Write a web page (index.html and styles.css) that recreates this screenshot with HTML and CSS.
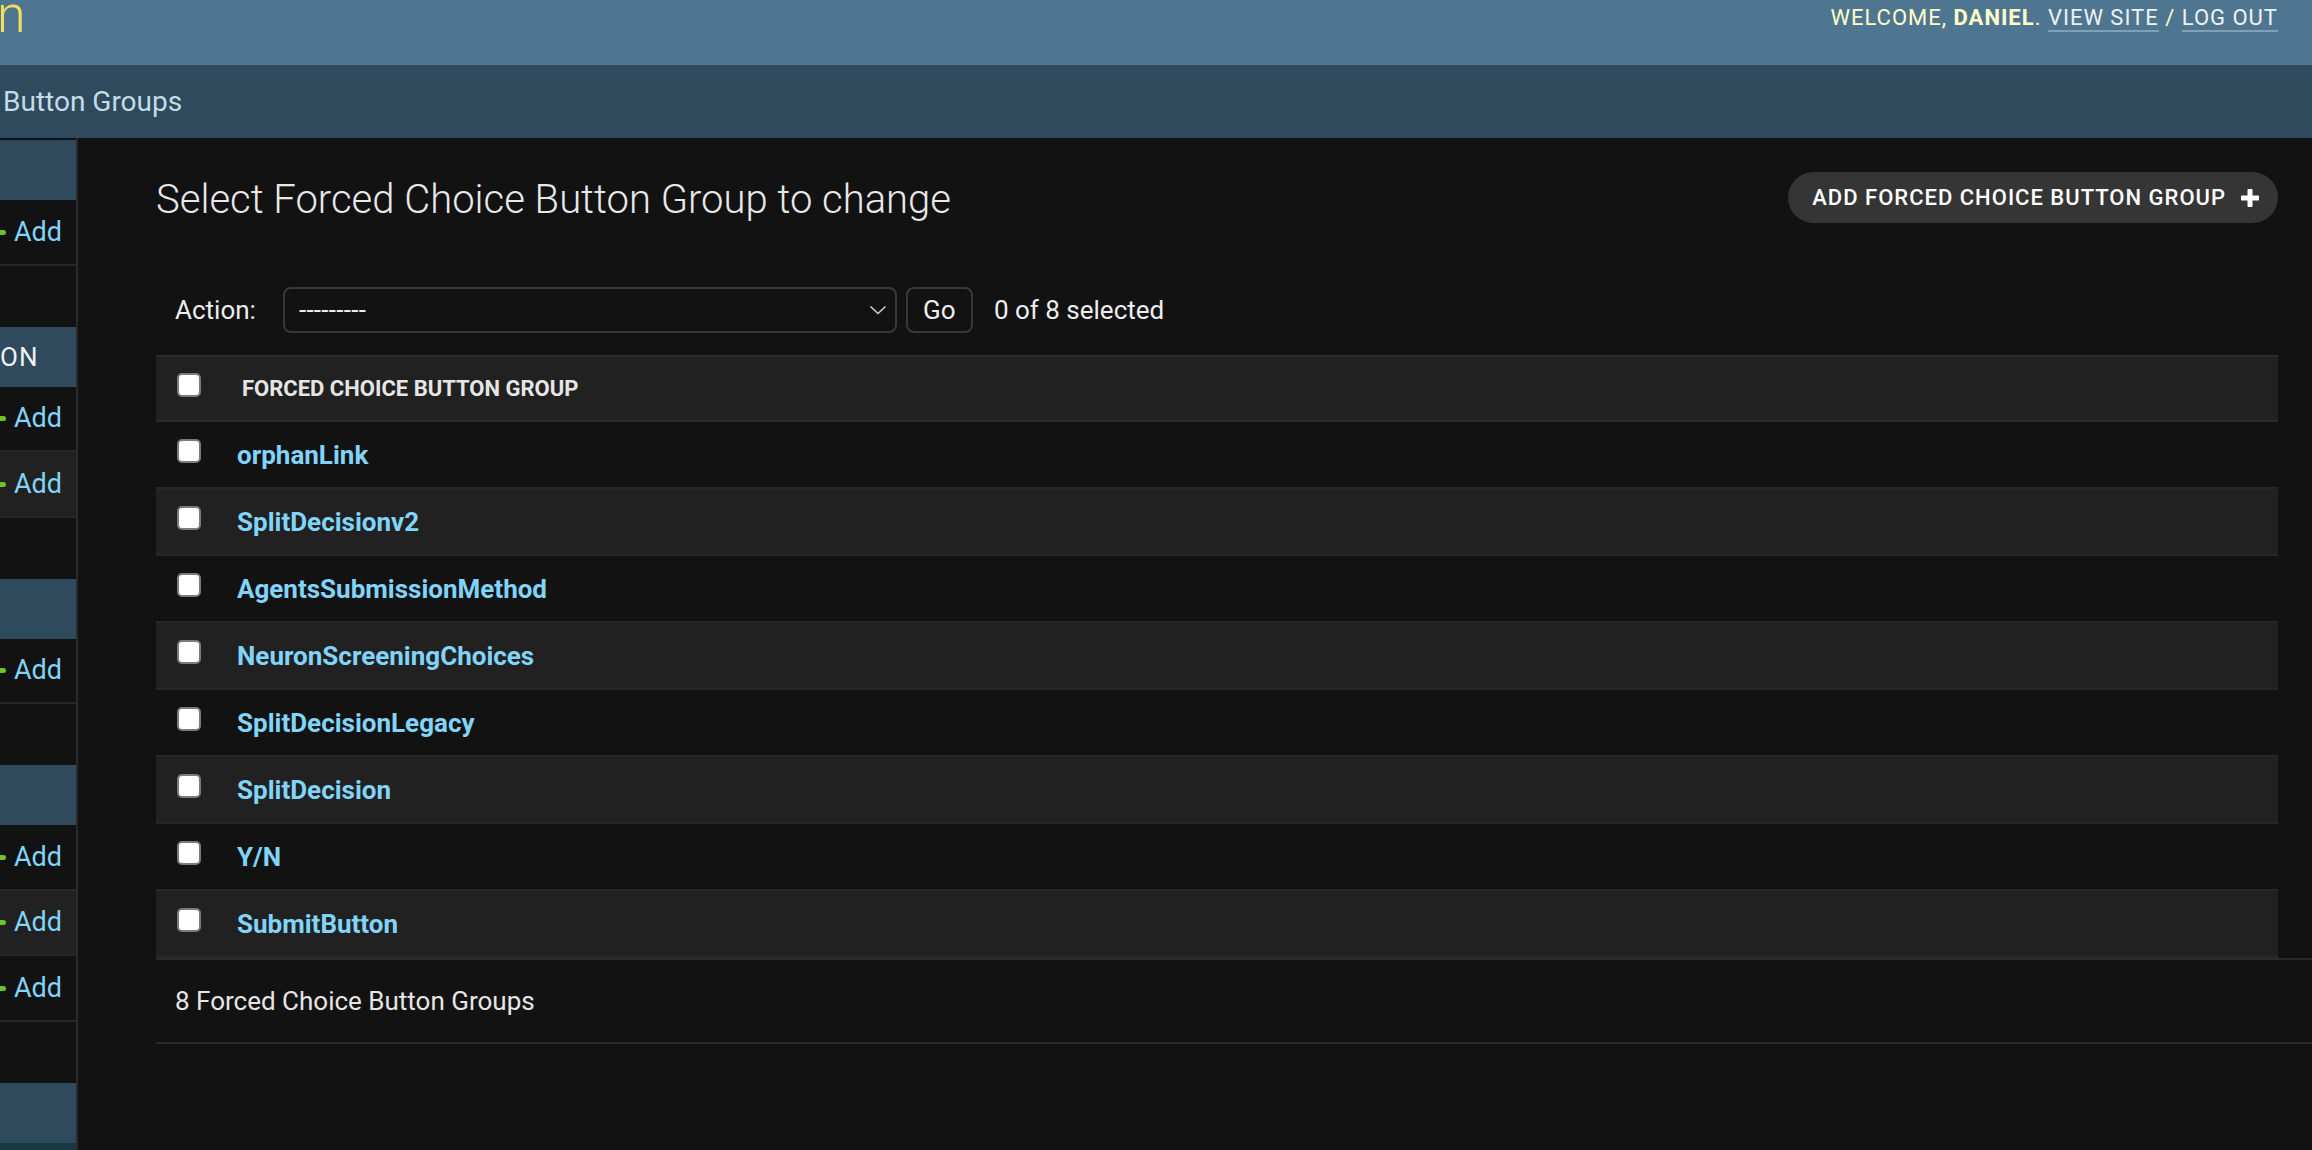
FILE: index.html
```html
<!DOCTYPE html>
<html lang="en">
<head>
<meta charset="utf-8">
<title>Select Forced Choice Button Group to change</title>
<link rel="stylesheet" href="styles.css">
</head>
<body>
<div class="header">
  <div class="brand">n</div>
  <div class="user-tools">WELCOME, <strong>DANIEL</strong>. <a class="ut-link">VIEW SITE</a> / <a class="ut-link">LOG OUT</a></div>
</div>
<div class="breadcrumbs">Button Groups</div>
<div class="main">
  <nav class="sidebar">
    <div class="module">
      <div class="caption"></div>
      <div class="srow"><span class="plus"></span><span class="add">Add</span></div>
    </div>
    <div class="module">
      <div class="caption">ON</div>
      <div class="srow"><span class="plus"></span><span class="add">Add</span></div>
      <div class="srow alt"><span class="plus"></span><span class="add">Add</span></div>
    </div>
    <div class="module">
      <div class="caption"></div>
      <div class="srow"><span class="plus"></span><span class="add">Add</span></div>
    </div>
    <div class="module">
      <div class="caption"></div>
      <div class="srow"><span class="plus"></span><span class="add">Add</span></div>
      <div class="srow alt"><span class="plus"></span><span class="add">Add</span></div>
      <div class="srow"><span class="plus"></span><span class="add">Add</span></div>
    </div>
    <div class="module">
      <div class="caption"></div>
      <div class="srow current"></div>
    </div>
  </nav>
  <div class="content">
    <div class="content-head">
      <h1 class="title">Select Forced Choice Button Group to change</h1>
      <a class="addbtn">ADD FORCED CHOICE BUTTON GROUP
        <svg class="plus-icon" width="18" height="18" viewBox="0 0 18 18"><path d="M9 1.5v15M1.5 9h15" stroke="#ffffff" stroke-width="5" stroke-linecap="round"/></svg>
      </a>
    </div>
    <div class="actions">
      <span class="action-label">Action:</span>
      <div class="select"><span class="select-text">---------</span>
        <svg class="chev" width="18" height="10" viewBox="0 0 18 10"><path d="M1.5 1.5L9 8.5l7.5-7" fill="none" stroke="#cfcfcf" stroke-width="1.6"/></svg>
      </div>
      <div class="go">Go</div>
      <span class="counter">0 of 8 selected</span>
    </div>
    <div class="table">
      <div class="thead"><span class="cb"></span><span class="th-text">FORCED CHOICE BUTTON GROUP</span></div>
      <div class="tr"><span class="cb"></span><a class="link">orphanLink</a></div>
      <div class="tr alt"><span class="cb"></span><a class="link">SplitDecisionv2</a></div>
      <div class="tr"><span class="cb"></span><a class="link">AgentsSubmissionMethod</a></div>
      <div class="tr alt"><span class="cb"></span><a class="link">NeuronScreeningChoices</a></div>
      <div class="tr"><span class="cb"></span><a class="link">SplitDecisionLegacy</a></div>
      <div class="tr alt"><span class="cb"></span><a class="link">SplitDecision</a></div>
      <div class="tr"><span class="cb"></span><a class="link">Y/N</a></div>
      <div class="tr alt"><span class="cb"></span><a class="link">SubmitButton</a></div>
    </div>
    <div class="paginator">8 Forced Choice Button Groups</div>
  </div>
</div>
</body>
</html>
```
FILE: styles.css
```css
html, body {
  margin: 0;
  padding: 0;
}
body {
  width: 2312px;
  height: 1150px;
  overflow: hidden;
  background: #121212;
  font-family: Roboto, "Liberation Sans", Arial, sans-serif;
  color: #e6e6e6;
}
.header {
  height: 65px;
  background: #4f7690;
  display: flex;
  justify-content: space-between;
  align-items: flex-start;
  padding-right: 34px;
  box-sizing: border-box;
}
.brand {
  font-size: 52px;
  font-weight: 300;
  line-height: 52px;
  color: #f5dd5d;
  margin-top: -11px;
  margin-left: -3px;
}
.user-tools {
  font-size: 22px;
  letter-spacing: 1px;
  line-height: 30px;
  padding-top: 3px;
  color: #ffffcc;
}
.user-tools strong {
  font-weight: 700;
}
.ut-link {
  color: #eef2f5;
  border-bottom: 2px solid rgba(255, 255, 255, 0.3);
}
.breadcrumbs {
  height: 73px;
  line-height: 73px;
  background: #2e4a5c;
  color: #c4dce8;
  font-size: 28px;
  padding-left: 3px;
}
.main {
  display: flex;
  height: 1012px;
}
.sidebar {
  width: 76px;
  flex: none;
  border-right: 2px solid #2b2b2b;
  padding-top: 2px;
  overflow: hidden;
}
.module {
  margin-bottom: 61px;
}
.caption {
  height: 60px;
  background: #2e4a5c;
  color: #f2f2f2;
  font-size: 26px;
  letter-spacing: 1px;
  line-height: 60px;
  white-space: nowrap;
}
.srow {
  height: 63.5px;
  border-bottom: 2px solid #272727;
  display: flex;
  align-items: center;
  gap: 8px;
}
.srow.alt {
  background: #212121;
}
.srow.current {
  background: #17383e;
  border-bottom: none;
}
.plus {
  width: 6px;
  height: 5px;
  background: #70bf2b;
  border-radius: 0 3px 3px 0;
  margin-top: 1px;
}
.add {
  color: #81d4fa;
  font-size: 27px;
}
.content {
  flex: 1;
  padding: 38px 34px 0 78px;
  min-width: 0;
}
.content-head {
  display: flex;
  justify-content: space-between;
  align-items: flex-start;
}
.title {
  margin: 0;
  font-size: 40px;
  font-weight: 300;
  line-height: 48px;
  color: #e8e8e8;
}
.addbtn {
  margin-top: -4px;
  height: 51px;
  box-sizing: border-box;
  padding: 0 19px 0 24px;
  border-radius: 26px;
  background: #353535;
  display: flex;
  align-items: center;
  gap: 15px;
  font-size: 22px;
  font-weight: 500;
  letter-spacing: 1px;
  color: #ffffff;
}
.plus-icon {
  display: block;
}
.actions {
  margin-top: 63px;
  height: 46px;
  display: flex;
  align-items: center;
  padding-left: 19px;
  font-size: 26px;
  color: #eeeeee;
}
.action-label {
  margin-right: 27px;
}
.select {
  width: 614px;
  height: 46px;
  box-sizing: border-box;
  border: 2px solid #393939;
  border-radius: 8px;
  display: flex;
  align-items: center;
  justify-content: space-between;
  padding: 0 8px 0 14px;
}
.select-text {
  font-size: 26px;
  letter-spacing: 0.3px;
  color: #eeeeee;
}
.chev {
  display: block;
}
.go {
  margin-left: 9px;
  width: 67px;
  height: 46px;
  box-sizing: border-box;
  border: 2px solid #393939;
  border-radius: 8px;
  display: flex;
  align-items: center;
  justify-content: center;
  color: #eeeeee;
}
.counter {
  margin-left: 21px;
}
.table {
  margin-top: 22px;
}
.thead {
  height: 63px;
  border-top: 2px solid #2a2a2a;
  border-bottom: 2px solid #2a2a2a;
  background: #212121;
  display: flex;
  align-items: center;
  padding-left: 21px;
}
.th-text {
  margin-left: 41px;
  font-size: 22px;
  font-weight: 700;
  color: #e6e6e6;
}
.tr {
  height: 65px;
  border-bottom: 2px solid #272727;
  display: flex;
  align-items: center;
  padding-left: 21px;
}
.tr.alt {
  background: #212121;
}
.cb {
  width: 24px;
  height: 24px;
  box-sizing: border-box;
  border: 2px solid #7a7a7a;
  border-radius: 5px;
  background: #ffffff;
  margin-bottom: 8px;
  flex: none;
}
.link {
  margin-left: 36px;
  font-size: 26px;
  font-weight: 700;
  color: #81d4fa;
}
.paginator {
  margin-right: -34px;
  height: 82px;
  line-height: 82px;
  border-top: 2px solid #2a2a2a;
  border-bottom: 2px solid #2a2a2a;
  padding-left: 19px;
  font-size: 26px;
  color: #e6e6e6;
}
```
